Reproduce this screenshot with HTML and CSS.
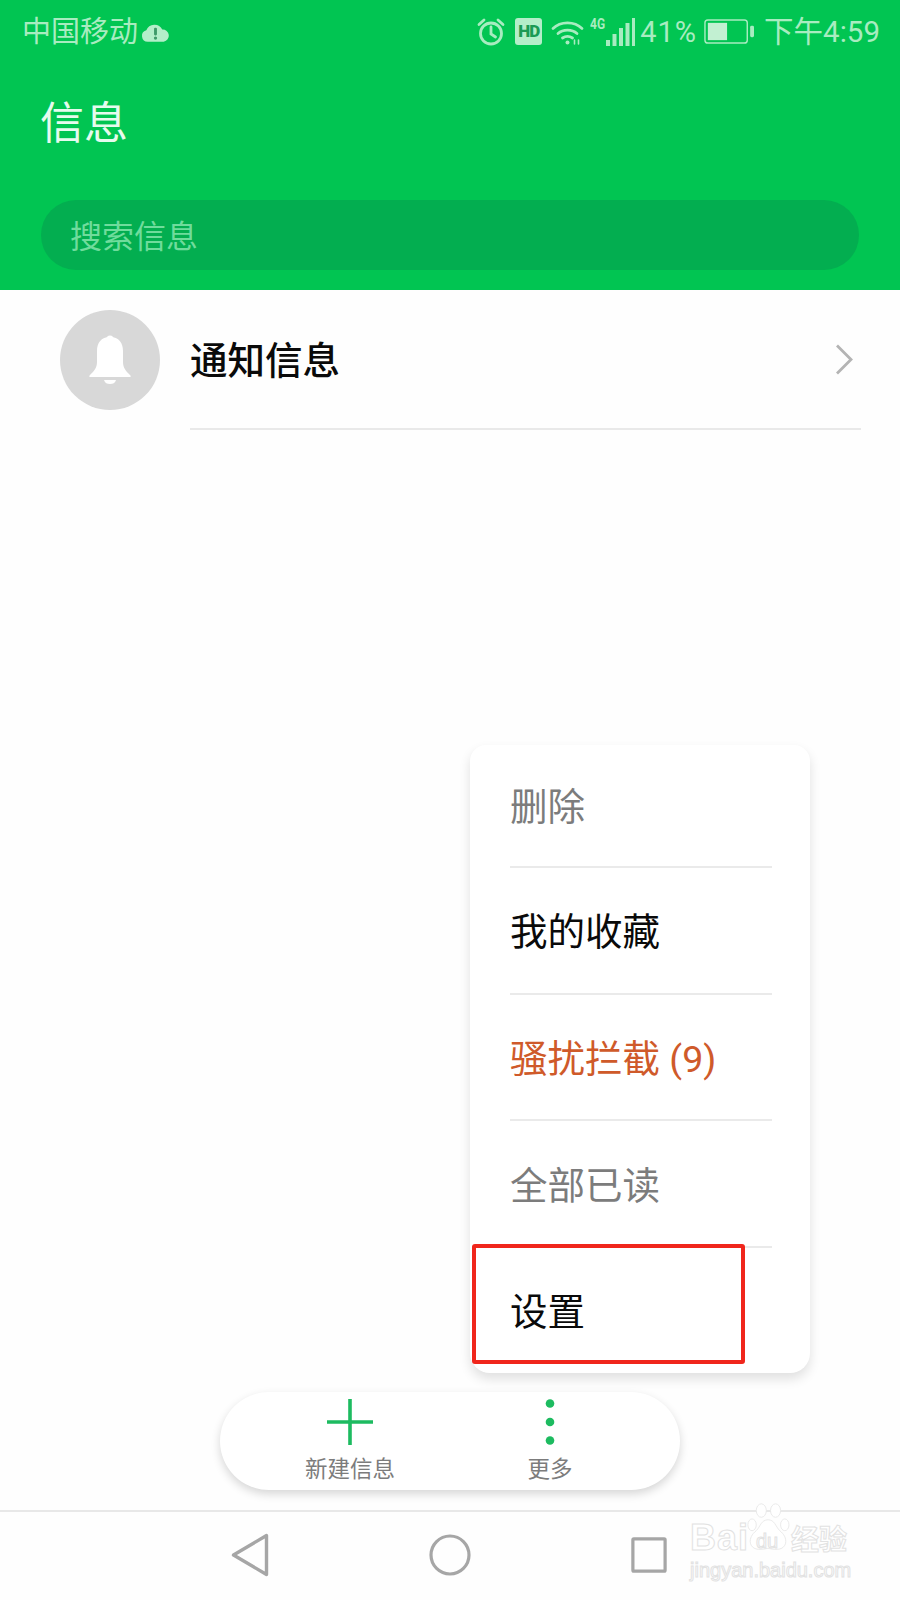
FILE: index.html
```html
<!DOCTYPE html>
<html lang="zh-CN">
<head>
<meta charset="utf-8">
<title>信息</title>
<link rel="stylesheet" href="styles.css">
</head>
<body>
<div class="phone">
  <header class="header">
    <div class="status">
      <div class="status-left">
        <span class="carrier">中国移动</span>
        <svg class="ic-cloud" viewBox="0 0 30 20"><path fill="#b4eec9" d="M7 19a6 6 0 0 1-1.500-11.800A9 9 0 0 1 22 6.500 6.300 6.300 0 0 1 23.500 19z"/><rect x="13.500" y="4.500" width="3" height="8" rx="1.200" fill="#3f9a69"/><circle cx="15" cy="15.200" r="1.700" fill="#3f9a69"/></svg>
      </div>
      <div class="status-right">
        <svg class="ic-alarm" viewBox="0 0 28 28" fill="none" stroke="#a8ecc0" stroke-width="2.800"><circle cx="14" cy="15.500" r="10.500"/><path d="M14 9v7l4.500 3M2 6.500 7 2M26 6.500 21 2" stroke-linecap="round"/></svg>
        <span class="hd">HD</span>
        <svg class="ic-wifi" viewBox="0 0 32 26" fill="none" stroke="#a8ecc0" stroke-width="2.800" stroke-linecap="round"><path d="M1.500 9.500C9 2 23 2 30.500 9.500M6.500 14.500c5-4.500 14-4.500 19 0M11 19c3-2 7-2 10 0"/><circle cx="16" cy="23.500" r="2" fill="#a8ecc0" stroke="none"/><path d="M23 25v-4M27 25v-4" stroke-width="1.600"/></svg>
        <div class="signal">
          <span class="net">4G</span>
          <svg class="ic-bars" viewBox="0 0 30 28" fill="#a8ecc0"><rect x="0" y="22" width="4" height="6"/><rect x="6.500" y="16" width="4" height="12"/><rect x="13" y="10" width="4" height="18"/><rect x="19.500" y="5" width="4" height="23"/><rect x="26" y="0" width="3" height="28"/></svg>
        </div>
        <span class="pct">41%</span>
        <svg class="ic-batt" viewBox="0 0 52 26"><rect x="1" y="1" width="44" height="24" rx="3" fill="none" stroke="#a8ecc0" stroke-width="1.500"/><rect x="4" y="4" width="20" height="18" fill="#c2f0d2"/><rect x="48" y="7" width="4" height="12" rx="1.500" fill="#a8ecc0"/></svg>
        <span class="time">下午4:59</span>
      </div>
    </div>
    <h1 class="title">信息</h1>
    <div class="search">搜索信息</div>
  </header>

  <main class="content">
    <section class="row">
      <div class="avatar">
        <svg class="ic-bell" viewBox="0 0 44 52" fill="#fff"><circle cx="22" cy="5" r="3.500"/><path d="M22 3c-9 0-13 6-13 14v11c0 6-3 9-7 13-1 1-1 2 0 2h40c1 0 1-1 0-2-4-4-7-7-7-13V17C35 9 31 3 22 3z"/><path d="M16 46h12c-1 3-3 4-6 4s-5-1-6-4z"/></svg>
      </div>
      <div class="row-body">
        <span class="row-title">通知信息</span>
        <svg class="ic-chev" viewBox="0 0 18 32" fill="none" stroke="#b4b4b4" stroke-width="2.800"><path d="M2 2l14 14L2 30"/></svg>
      </div>
    </section>

    <nav class="menu">
      <div class="menu-item muted">删除</div>
      <div class="menu-item">我的收藏</div>
      <div class="menu-item accent">骚扰拦截 (9)</div>
      <div class="menu-item muted">全部已读</div>
      <div class="menu-item last">设置</div>
    </nav>
    <div class="highlight"></div>

    <div class="pill">
      <div class="pill-btn">
        <svg class="ic-plus" viewBox="0 0 46 46"><path d="M23 0v46M0 23h46" stroke="#1dbb60" stroke-width="3.600" fill="none"/></svg>
        <span class="pill-label">新建信息</span>
      </div>
      <div class="pill-btn">
        <svg class="ic-plus" viewBox="0 0 46 46" fill="#1dbb60"><circle cx="23" cy="4.500" r="4.300"/><circle cx="23" cy="23" r="4.300"/><circle cx="23" cy="41.500" r="4.300"/></svg>
        <span class="pill-label">更多</span>
      </div>
    </div>
  </main>

  <footer class="navbar">
    <svg class="ic-back" viewBox="0 0 38 44" fill="none" stroke="#a6a6a6" stroke-width="3.400" stroke-linejoin="round"><path d="M35.500 2.500v39L2.500 22z"/></svg>
    <svg class="ic-home" viewBox="0 0 42 42" fill="none" stroke="#a6a6a6" stroke-width="3.200"><circle cx="21" cy="21" r="19"/></svg>
    <svg class="ic-recent" viewBox="0 0 38 38" fill="none" stroke="#a6a6a6" stroke-width="3.400" stroke-linejoin="round"><rect x="2" y="2" width="34" height="34" rx="1"/></svg>
  </footer>

  <div class="watermark">
    <div class="wm-top">
      <span class="wm-bai">Bai</span>
      <svg class="ic-paw" viewBox="0 0 50 62" fill="#fff" stroke="#e6e6e6" stroke-width="1"><ellipse cx="6" cy="26" rx="5" ry="7"/><ellipse cx="17" cy="9" rx="6" ry="8"/><ellipse cx="34" cy="9" rx="6" ry="8"/><ellipse cx="45" cy="26" rx="5" ry="7"/><path d="M25 20c-8 0-9 8-14 13-5 4-8 9-7 15 2 7 9 9 21 6 12 3 19 1 21-6 1-6-2-11-7-15-5-5-6-13-14-13z"/></svg>
      <span class="wm-du">du</span>
      <span class="wm-cn">经验</span>
    </div>
    <div class="wm-url">jingyan.baidu.com</div>
  </div>
</div>
</body>
</html>
```

FILE: styles.css
```css
* { box-sizing: border-box; margin: 0; padding: 0; }

html, body { width: 900px; height: 1600px; overflow: hidden; }

body {
  background: #fefefe;
  font-family: Roboto, "Noto Sans CJK SC", sans-serif;
}

.phone {
  position: relative;
  width: 900px;
  height: 1600px;
  display: flex;
  flex-direction: column;
}

/* Header */
.header {
  height: 290px;
  flex: none;
  background: #01c552;
  padding: 0 41px 20px;
  display: flex;
  flex-direction: column;
}

.status {
  height: 63px;
  margin: 0 -21px 0 -19px;
  display: flex;
  align-items: center;
  justify-content: space-between;
  color: #a8ecc0;
  font-size: 29px;
  line-height: 34px;
}

.status-left { display: flex; align-items: center; gap: 3px; }
.status-right { display: flex; align-items: center; }

.ic-cloud { width: 29px; height: 20px; display: block; margin-top: 2px; }
.ic-alarm { width: 28px; height: 28px; display: block; }
.hd {
  width: 27px;
  height: 27px;
  margin-left: 10px;
  background: #b4eec9;
  border-radius: 3px;
  color: #1c9a55;
  font-size: 17px;
  font-weight: 900;
  line-height: 27px;
  text-align: center;
  letter-spacing: -1px;
}
.ic-wifi { width: 33px; height: 26px; display: block; margin-left: 9px; }
.signal { display: flex; align-items: flex-end; margin-left: 6px; height: 28px; }
.net { font-size: 15px; line-height: 13px; font-weight: 700; align-self: flex-start; width: 16px; transform: scaleX(.8); transform-origin: left; }
.ic-bars { width: 30px; height: 28px; display: block; }
.pct { margin-left: 4px; letter-spacing: 1px; }
.ic-batt { width: 50px; height: 25px; display: block; margin-left: 7px; }
.time { margin-left: 10px; font-size: 29.500px; }

.title {
  margin: 36px 0 0 -1px;
  font-size: 44px;
  line-height: 50px;
  font-weight: 400;
  color: #e6fbee;
}

.search {
  margin-top: auto;
  height: 70px;
  width: 818px;
  border-radius: 35px;
  background: #03ae50;
  padding-left: 29px;
  color: #6fdc9c;
  font-size: 32px;
  line-height: 74px;
}

/* Main list */
.content {
  position: relative;
  flex: 1;
  min-height: 0;
}

.row {
  display: flex;
  align-items: flex-start;
  padding: 20px 39px 0 60px;
}

.avatar {
  width: 100px;
  height: 100px;
  flex: none;
  border-radius: 50%;
  background: #d8d8d8;
  display: flex;
  align-items: center;
  justify-content: center;
}

.ic-bell { width: 44px; height: 52px; display: block; }

.row-body {
  flex: 1;
  margin-left: 30px;
  height: 120px;
  padding: 0 8px 20px 0;
  border-bottom: 2px solid #e9e9e9;
  display: flex;
  align-items: center;
  justify-content: space-between;
}

.row-title {
  margin-top: -4px;
  font-size: 37.500px;
  font-weight: 500;
  color: #0a0a0a;
}

.ic-chev { width: 18px; height: 33px; display: block; }

/* Popup menu */
.menu {
  position: absolute;
  left: 470px;
  top: 455px;
  width: 340px;
  height: 628px;
  background: #fff;
  border-radius: 16px 16px 20px 20px;
  box-shadow: 0 6px 12px rgba(0, 0, 0, .12);
  padding: 0 38px 0 40px;
  display: flex;
  flex-direction: column;
}

.menu-item {
  height: 126.500px;
  flex: none;
  border-bottom: 2px solid #eaeaea;
  font-size: 37.500px;
  line-height: 128px;
  color: #0a0a0a;
  white-space: nowrap;
}

.menu-item:first-child { height: 123px; line-height: 124px; }
.menu-item.muted { line-height: 130px; }
.menu-item.muted:first-child { line-height: 124px; }
.menu-item.last { border-bottom: 0; line-height: 128px; }
.menu-item.muted { color: #7c7c7c; }
.menu-item.accent { color: #cf5a2a; }

.highlight {
  position: absolute;
  left: 472px;
  top: 954px;
  width: 273px;
  height: 120px;
  border: 4px solid #f0261c;
  border-radius: 3px;
}

/* Floating action pill */
.pill {
  position: absolute;
  left: 220px;
  top: 1102px;
  width: 460px;
  height: 98px;
  border-radius: 49px;
  background: #fff;
  box-shadow: 0 4px 10px rgba(0, 0, 0, .16);
  display: flex;
  padding: 7px 30px 0;
}

.pill-btn {
  flex: 1;
  display: flex;
  flex-direction: column;
  align-items: center;
  gap: 9px;
}

.ic-plus { width: 46px; height: 46px; display: block; }

.pill-label {
  font-size: 22.500px;
  line-height: 30px;
  color: #7c7c7c;
}

/* Bottom nav */
.navbar {
  height: 90px;
  flex: none;
  border-top: 2px solid #e8e8e8;
  display: flex;
  align-items: center;
  justify-content: center;
  gap: 160px;
  padding: 0 2px 3px 0;
}

.ic-back { width: 38px; height: 44px; display: block; }
.ic-home { width: 42px; height: 42px; display: block; }
.ic-recent { width: 36px; height: 36px; display: block; }

/* Watermark */
.watermark {
  position: absolute;
  left: 690px;
  top: 1503px;
  width: 170px;
  color: #fff;
  -webkit-text-stroke: 1px #e2e2e2;
}

.wm-top { position: relative; display: flex; align-items: flex-end; height: 52px; }
.wm-bai { font-family: "Liberation Sans", sans-serif; font-size: 36px; line-height: 36px; font-weight: 700; letter-spacing: 1px; margin-bottom: -1px; width: 55px; flex: none; }
.ic-paw { width: 46px; height: 52px; display: block; flex: none; }
.wm-du { position: absolute; left: 66px; bottom: 3px; font-size: 20px; line-height: 22px; font-family: "Liberation Sans", sans-serif; }
.wm-cn { font-size: 28px; line-height: 34px; font-weight: 700; margin-bottom: -3px; white-space: nowrap; }
.wm-url { font-size: 20px; line-height: 26px; margin-top: 2px; font-family: "Liberation Sans", sans-serif; white-space: nowrap; }
```
